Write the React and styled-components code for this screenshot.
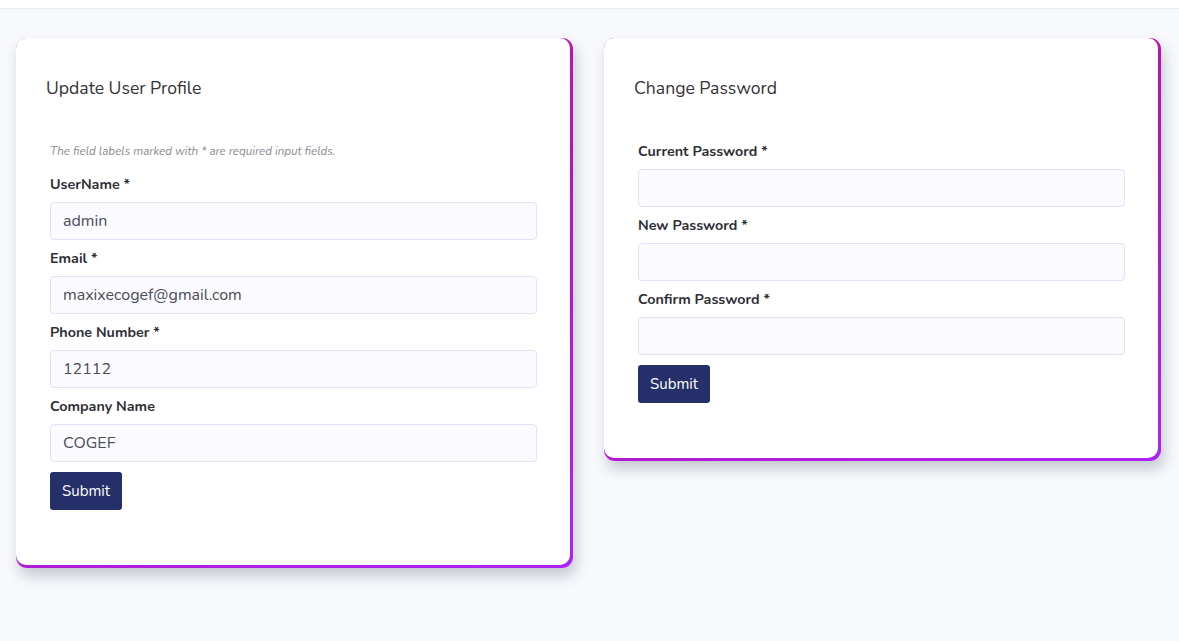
import React from 'react'
import styled, { createGlobalStyle } from 'styled-components'

const GlobalStyle = createGlobalStyle`
  html, body {
    margin: 0;
    padding: 0;
    background: #f8f9fd;
    font-family: "Nunito", "Noto Sans", sans-serif;
  }
  * { box-sizing: border-box; }
`

const profileFields = [
  { label: 'UserName *', value: 'admin' },
  { label: 'Email *', value: 'maxixecogef@gmail.com' },
  { label: 'Phone Number *', value: '12112' },
  { label: 'Company Name', value: 'COGEF' },
]

const passwordFields = [
  { label: 'Current Password *' },
  { label: 'New Password *' },
  { label: 'Confirm Password *' },
]

const FormField = ({ label, value }) => (
  <Field>
    <Label>{label}</Label>
    <Input type={value === undefined ? 'password' : 'text'} defaultValue={value} />
  </Field>
)

export default () => (
  <Page>
    <GlobalStyle />
    <TopBar />
    <Content>
      <CardFrame>
        <Card>
          <Title>Update User Profile</Title>
          <Form>
            <Note>The field labels marked with * are required input fields.</Note>
            {profileFields.map(f => <FormField key={f.label} {...f} />)}
            <SubmitButton>Submit</SubmitButton>
          </Form>
        </Card>
      </CardFrame>
      <CardFrame>
        <Card>
          <Title>Change Password</Title>
          <Form $shift={-1}>
            {passwordFields.map(f => <FormField key={f.label} {...f} />)}
            <SubmitButton>Submit</SubmitButton>
          </Form>
        </Card>
      </CardFrame>
    </Content>
  </Page>
)

const Page = styled.div`
  min-height: 641px;
  background: #f8f9fd;
`

const TopBar = styled.div`
  height: 9px;
  background: #fff;
  border-bottom: 1px solid #ebedf2;
`

const Content = styled.div`
  display: grid;
  grid-template-columns: 557px 557px;
  column-gap: 31px;
  align-items: start;
  padding: 29px 16px 0;
`

const CardFrame = styled.div`
  background: linear-gradient(160deg, #c8149a 0%, #b416b4 45%, #ad22f7 100%);
  padding: 0 3px 3px 0;
  border-radius: 11px;
  box-shadow: 3px 8px 14px rgba(40, 44, 70, 0.24);
`

const Card = styled.div`
  background: #fff;
  border-radius: 10px;
  padding: 38px 33px 55px 30px;
`

const Title = styled.h4`
  margin: 0 0 43px;
  font-size: 17.6px;
  font-weight: 400;
  color: #333338;
  line-height: 24px;
`

const Form = styled.div`
  display: flex;
  flex-direction: column;
  padding-left: 4px;
  margin-top: ${p => p.$shift || 0}px;
`

const Note = styled.p`
  margin: 0 0 16px;
  font-size: 11.6px;
  font-style: italic;
  color: #8a8a94;
  line-height: 16px;
`

const Field = styled.div`
  display: flex;
  flex-direction: column;
  margin-bottom: 9px;
`

const Label = styled.label`
  font-size: 14.3px;
  font-weight: 700;
  color: #2e2e36;
  line-height: 20px;
  margin-bottom: 7px;
`

const Input = styled.input`
  height: 38px;
  width: 100%;
  padding: 0 12px;
  border: 1px solid #e4e0f8;
  border-radius: 4px;
  background: #fafaff;
  font-family: inherit;
  font-size: 16px;
  color: #4a4d5a;
  outline: none;
`

const SubmitButton = styled.button`
  align-self: flex-start;
  height: 38px;
  margin-top: 1px;
  padding: 0 12px;
  border: none;
  border-radius: 3px;
  background: #25306b;
  color: #fff;
  font-family: inherit;
  font-size: 15px;
  cursor: pointer;
`
